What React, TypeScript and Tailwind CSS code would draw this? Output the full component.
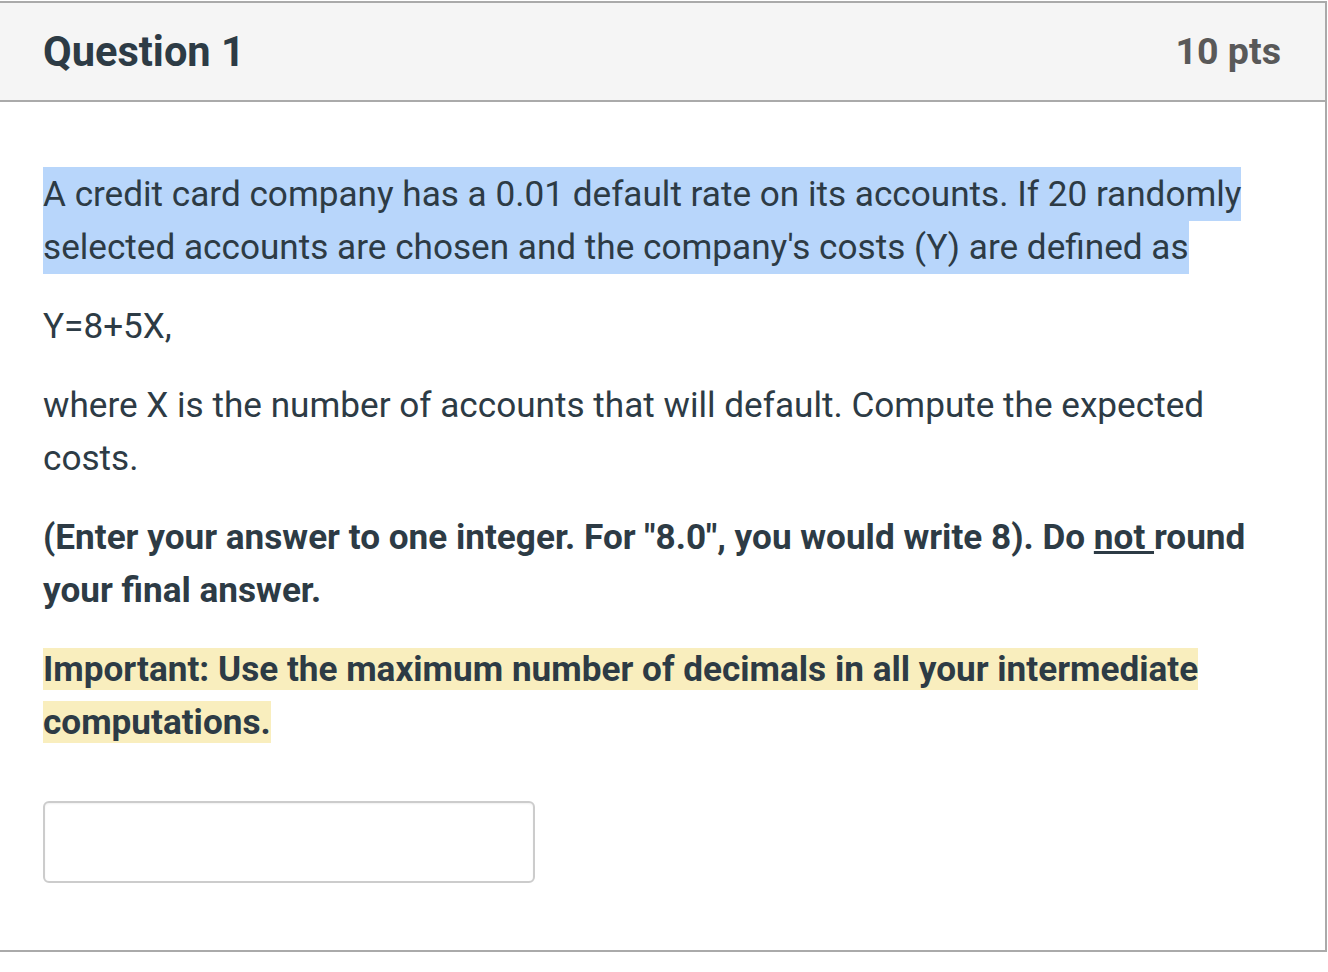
export default function App() {
  return (
    <div className="min-h-[972px] bg-white pt-px font-['Roboto',sans-serif] text-[#2d3b45]">
      <div className="w-[1327px] border-t-2 border-r-2 border-b-2 border-[#aaaaaa]">
        {/* Header */}
        <div className="flex h-[99px] items-center justify-between border-b-2 border-[#aaaaaa] bg-[#f5f5f5] pl-[43px] pr-[44px]">
          <h2 className="text-[41.6px] font-bold leading-none">Question 1</h2>
          <div className="text-[37.6px] font-bold leading-none text-[#595959]">10 pts</div>
        </div>

        {/* Body */}
        <div className="pl-[43px] pr-[44px] pt-[66px] pb-[67px] text-[35.15px] leading-[53px]">
          <p className="mb-[26px]">
            <span className="bg-[#b8d6fb] py-[6px] [box-decoration-break:clone]">
              A credit card company has a 0.01 default rate on its accounts. If 20 randomly selected accounts are chosen and the company's costs (Y) are defined as
            </span>
          </p>
          <p className="mb-[26px]">Y=8+5X,</p>
          <p className="mb-[26px]">where X is the number of accounts that will default. Compute the expected costs.</p>
          <p className="mb-[26px] font-bold">
            (Enter your answer to one integer. For "8.0", you would write 8). Do <u>not </u>round your final answer.
          </p>
          <p className="font-bold">
            <span className="bg-[#f9eebe]">
              Important: Use the maximum number of decimals in all your intermediate computations.
            </span>
          </p>
          <div className="mt-[52px]">
            <input
              type="text"
              className="box-border block h-[82px] w-[492px] rounded-[6px] border-2 border-[#cccccc] bg-white shadow-[inset_0_1px_2px_rgba(0,0,0,0.06)] outline-none"
            />
          </div>
        </div>
      </div>
    </div>
  );
}
